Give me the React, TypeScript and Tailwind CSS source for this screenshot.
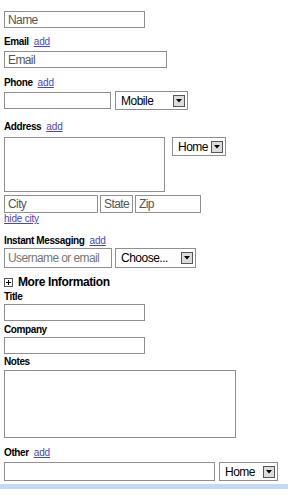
import React from "react";

const font = { fontFamily: '"Liberation Sans", Arial, sans-serif' };

function Label({ text, add = false, className = "" }: { text: string; add?: boolean; className?: string }) {
  return (
    <div className={"flex items-end h-[14px] text-[10px] leading-[14px] font-bold tracking-[-0.4px] text-black whitespace-nowrap " + className}>
      <span>{text}</span>
      {add && <span className="ml-[5px] font-normal tracking-[-0.1px] text-[#4a44c4] underline">add</span>}
    </div>
  );
}

function Box({ className = "", text = "" }: { className?: string; text?: string }) {
  return (
    <div className={"border border-[#8f8f8f] bg-white text-[12px] tracking-[-0.6px] leading-none text-[#555] whitespace-nowrap overflow-hidden flex items-center pl-[3px] " + className}>
      {text}
    </div>
  );
}

function Select({ text, className = "" }: { text: string; className?: string }) {
  return (
    <div className={"border border-[#8f8f8f] bg-white flex items-center justify-between pl-[5px] pr-[2px] text-[12px] tracking-[-0.5px] text-black whitespace-nowrap " + className}>
      <span className="leading-none">{text}</span>
      <span className="w-[12px] h-[12px] border border-[#555] bg-[#dcdcdc] flex items-center justify-center">
        <svg width="6" height="4" viewBox="0 0 6 4"><path d="M0 0h6L3 3.5z" fill="#000" /></svg>
      </span>
    </div>
  );
}

export default function App() {
  return (
    <div style={font} className="w-[288px] h-[500px] bg-white relative">
      <div className="pl-[4px]">
        <Box className="mt-[11px] h-[17px] w-[141px]" text="Name" />
        <Label text="Email" add className="mt-[7px]" />
        <Box className="mt-[2px] h-[17px] w-[163px]" text="Email" />
        <Label text="Phone" add className="mt-[8px]" />
        <div className="flex items-center mt-[1px] h-[19px]">
          <Box className="h-[17px] w-[107px]" />
          <Select text="Mobile" className="ml-[4px] h-[19px] w-[73px]" />
        </div>
        <Label text="Address" add className="mt-[10px]" />
        <div className="flex mt-[3px]">
          <Box className="h-[55px] w-[161px]" />
          <Select text="Home" className="ml-[7px] h-[19px] w-[54px]" />
        </div>
        <div className="flex mt-[3px]">
          <Box className="h-[18px] w-[94px]" text="City" />
          <Box className="ml-[2px] h-[18px] w-[33px]" text="State" />
          <Box className="ml-[2px] h-[18px] w-[66px]" text="Zip" />
        </div>
        <div className="text-[10px] leading-[11px] tracking-[-0.2px] text-[#4a44c4] underline">hide city</div>
        <Label text="Instant Messaging" add className="mt-[10px]" />
        <div className="flex mt-[0px]">
          <Box className="h-[20px] w-[108px] text-[#777]" text="Username or email" />
          <Select text="Choose..." className="ml-[3px] h-[20px] w-[81px]" />
        </div>
        <div className="flex items-center mt-[7px] h-[14px]">
          <span className="w-[9px] h-[9px] border border-[#555] flex items-center justify-center mr-[5px]">
            <svg width="5" height="5" viewBox="0 0 5 5"><path d="M0 2.5h5M2.5 0v5" stroke="#000" strokeWidth="1" /></svg>
          </span>
          <span className="text-[12px] font-bold tracking-[-0.4px] text-black leading-none">More Information</span>
        </div>
        <Label text="Title" className="mt-[1px]" />
        <Box className="mt-[0px] h-[17px] w-[141px]" />
        <Label text="Company" className="mt-[2px]" />
        <Box className="h-[17px] w-[141px]" />
        <Label text="Notes" className="mt-[1px]" />
        <Box className="mt-[1px] h-[68px] w-[232px]" />
        <Label text="Other" add className="mt-[8px]" />
        <div className="flex mt-[2px]">
          <Box className="h-[19px] w-[211px]" />
          <Select text="Home" className="ml-[4px] h-[19px] w-[59px]" />
        </div>
      </div>
      <div className="mt-[3px] h-[5px] w-full bg-[#c5d9f7]" />
    </div>
  );
}
